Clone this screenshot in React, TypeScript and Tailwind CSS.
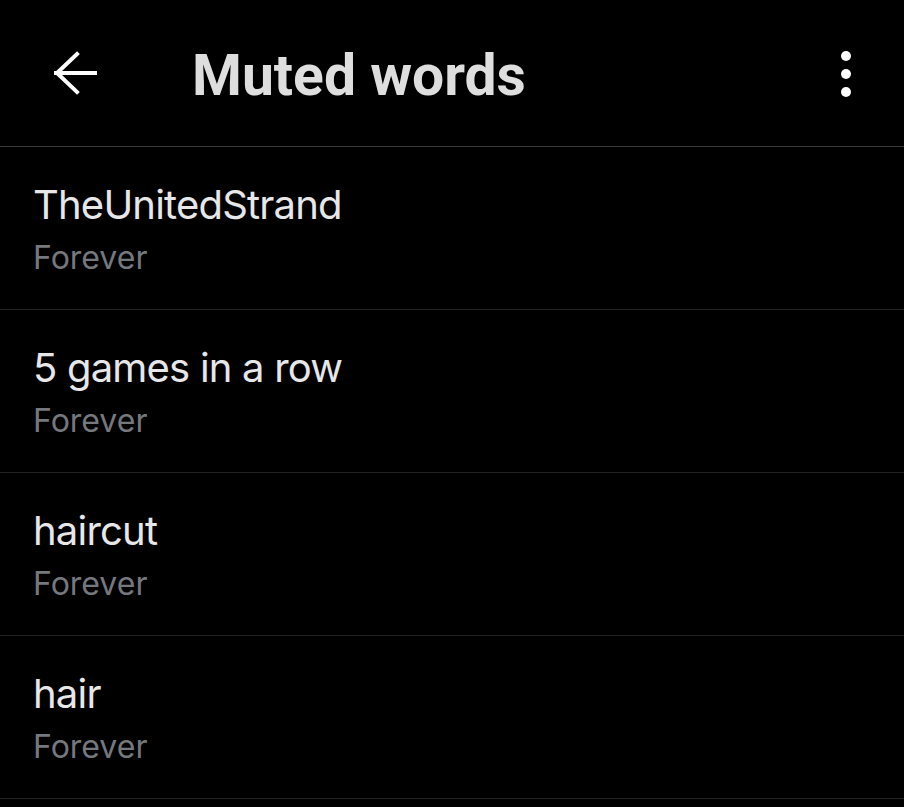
const WORDS = ["TheUnitedStrand", "5 games in a row", "haircut", "hair"];

function BackArrow() {
  return (
    <svg width="48" height="48" viewBox="0 0 48 48" fill="none" stroke="#ffffff" strokeWidth="4" strokeLinecap="square">
      <path d="M6 24H45" />
      <path d="M27 5L7 24L27 43" />
    </svg>
  );
}

function MoreDots() {
  return (
    <svg width="12" height="48" viewBox="0 0 12 48" fill="#ffffff">
      <circle cx="6" cy="7" r="5" />
      <circle cx="6" cy="25" r="5" />
      <circle cx="6" cy="43" r="5" />
    </svg>
  );
}

export default function App() {
  return (
    <div className="min-h-screen w-full bg-black font-['Inter','Roboto',sans-serif]">
      <header className="flex h-[147px] items-center border-b border-[#3b3b3b] pr-[52px] pl-[50px]">
        <div className="flex w-[142px] items-center pb-[1px]"><BackArrow /></div>
        <h1 className="flex-1 pt-[5px] font-['Roboto','Liberation_Sans',sans-serif] text-[57px] font-bold leading-none text-[#dedede]">Muted words</h1>
        <MoreDots />
      </header>
      {WORDS.map((w) => (
        <div key={w} className="flex h-[163px] flex-col justify-center border-b border-[#222222] px-[33px] pt-[3px]">
          <span className="text-[40px] leading-[48px] tracking-[-0.8px] text-[#e7e7e7]">{w}</span>
          <span className="mt-[9px] text-[32px] leading-[40px] text-[#75787d]">Forever</span>
        </div>
      ))}
    </div>
  );
}
